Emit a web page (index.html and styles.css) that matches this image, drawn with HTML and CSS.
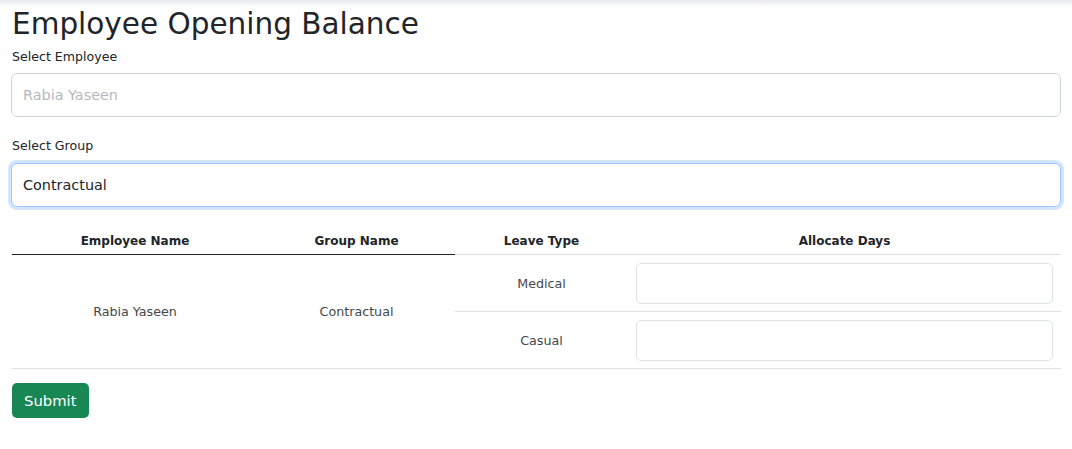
FILE: index.html
```html
<!DOCTYPE html>
<html>
<head>
<meta charset="utf-8">
<link rel="stylesheet" href="styles.css">
</head>
<body>
<div class="topbar"></div>
<main class="page">
  <h1 class="title">Employee Opening Balance</h1>
  <label class="label">Select Employee</label>
  <input class="field" type="text" placeholder="Rabia Yaseen">
  <label class="label label-gap">Select Group</label>
  <input class="field field-focus" type="text" value="Contractual">
  <div class="grid">
    <div class="th th-dark">Employee Name</div>
    <div class="th th-dark">Group Name</div>
    <div class="th">Leave Type</div>
    <div class="th">Allocate Days</div>
    <div class="td span2">Rabia Yaseen</div>
    <div class="td span2">Contractual</div>
    <div class="td">Medical</div>
    <div class="td td-input"><input class="small-field" type="text"></div>
    <div class="td">Casual</div>
    <div class="td td-input"><input class="small-field" type="text"></div>
  </div>
  <button class="btn" type="button">Submit</button>
</main>
</body>
</html>
```
FILE: styles.css
```css
* { box-sizing: border-box; }
body {
  margin: 0;
  font-family: "DejaVu Sans", sans-serif;
  color: #212529;
  background: #fff;
}
.topbar {
  height: 7px;
  background: linear-gradient(#e8e9ee, #ffffff);
}
.page {
  padding: 0 11px;
}
.title {
  margin: 0;
  font-weight: 400;
  font-size: 29.5px;
  line-height: 34px;
  padding-left: 1px;
  height: 41px;
}
.label {
  display: block;
  font-size: 12.6px;
  line-height: 18px;
  padding-left: 1px;
  margin-bottom: 7px;
}
.label-gap { margin-top: 20px; margin-bottom: 8px; }
.field {
  display: block;
  width: 100%;
  height: 44px;
  border: 1px solid #ced4da;
  border-radius: 6px;
  padding: 0 11px;
  font-family: inherit;
  font-size: 14.4px;
  color: #212529;
  outline: none;
}
.field::placeholder { color: #b5b9be; }
.field-focus {
  border-color: #9ec5fe;
  box-shadow: 0 0 0 3px rgba(13, 110, 253, 0.18);
}
.grid {
  display: grid;
  grid-template-columns: 246px 197px 173px 1fr;
  margin: 21px 0 0 1px;
}
.th {
  font-size: 12px;
  font-weight: 700;
  line-height: 14px;
  padding: 6px 8px;
  text-align: center;
  border-bottom: 1px solid #dee2e6;
}
.th-dark { border-bottom-color: #212529; }
.td {
  display: flex;
  align-items: center;
  justify-content: center;
  height: 57px;
  font-size: 12.7px;
  color: #44474b;
  border-bottom: 1px solid #dee2e6;
}
.span2 { grid-row: span 2; height: auto; }
.td-input { padding: 8px; justify-content: stretch; }
.small-field {
  width: 100%;
  height: 41px;
  border: 1px solid #dee2e6;
  border-radius: 5px;
  outline: none;
}
.btn {
  margin-top: 14px;
  margin-left: 1px;
  height: 35px;
  padding: 0 12px;
  border: none;
  border-radius: 5px;
  background: #198754;
  color: #fff;
  font-family: inherit;
  font-size: 14.8px;
}
```
